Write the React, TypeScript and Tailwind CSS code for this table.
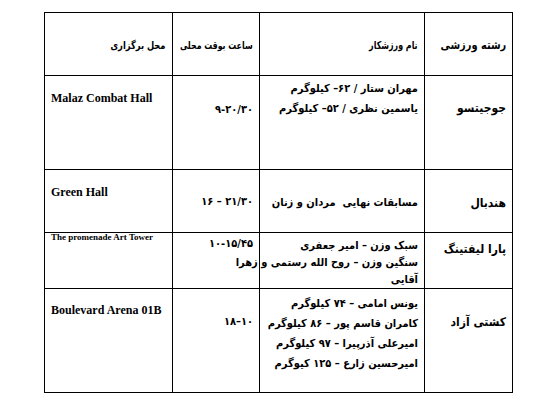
const fa = { fontFamily: '"DejaVu Sans Condensed", "DejaVu Sans", sans-serif' };
const en = { fontFamily: '"Liberation Serif", serif' };

// the source font is narrower than DejaVu, so headers get squeezed a little
const headers = [
  { label: 'رشته ورزشی', cls: 'text-[11.5px] scale-x-[0.95]' },
  { label: 'نام ورزشکار', cls: 'text-[11px] scale-x-[0.8]' },
  { label: 'ساعت بوقت محلی', cls: 'text-[10.5px] scale-x-[0.83]' },
  { label: 'محل برگزاری', cls: 'text-[10.5px] scale-x-[0.88]' },
];

export default function App() {
  return (
    <div className="w-[552px] h-[420px] bg-white pl-[44px] pt-[12px]">
      <table dir="rtl" className="w-[469px] table-fixed border-collapse text-black whitespace-nowrap" style={fa}>
        <colgroup>
          <col className="w-[88px]" />
          <col className="w-[165px]" />
          <col className="w-[87px]" />
          <col className="w-[128px]" />
        </colgroup>
        <tbody className="text-[11px] font-bold">
          <tr className="h-[63px]">
            {headers.map((h) => (
              <td key={h.label} className="border border-black align-middle pr-[6px] pt-[4px] text-right">
                <span className={`inline-block origin-right ${h.cls}`}>{h.label}</span>
              </td>
            ))}
          </tr>

          <tr className="h-[94px]">
            <td className="border border-black align-top pr-[6px] pt-[22px] leading-[20px] text-[12px]">جوجیتسو</td>
            <td className="border border-black align-top pr-[6px] pt-[3px] leading-[20px]">
              <div>مهران ستار / ۶۲– کیلوگرم</div>
              <div>یاسمین نظری / ۵۲– کیلوگرم</div>
            </td>
            <td className="border border-black align-top pr-[6px] pt-[24px] leading-[20px]">
              <span dir="ltr">۹-۲۰/۳۰</span>
            </td>
            <td dir="ltr" className="border border-black align-top pl-[6px] pt-[14px] text-left text-[12px] leading-[16px]" style={en}>
              Malaz Combat Hall
            </td>
          </tr>

          <tr className="h-[63px]">
            <td className="border border-black align-top pr-[6px] pt-[23px] leading-[20px] text-[12px]">هندبال</td>
            <td className="border border-black align-top pr-[6px] pt-[23px] leading-[20px]">مسابقات نهایی&nbsp; مردان و زنان</td>
            <td className="border border-black align-top pr-[6px] pt-[22px] leading-[20px]">
              <span dir="ltr">۱۶ – ۲۱/۳۰</span>
            </td>
            <td dir="ltr" className="border border-black align-top pl-[6px] pt-[14px] text-left text-[12px] leading-[16px]" style={en}>
              Green Hall
            </td>
          </tr>

          <tr className="h-[56px]">
            <td className="border border-black align-top pr-[6px] pt-[6px] leading-[20px] text-[12px]">پارا لیفتینگ</td>
            <td className="border border-black align-top pr-[6px] pt-[4px] leading-[17px]">
              <div>سبک وزن – امیر جعفری</div>
              <div>سنگین وزن – روح الله رستمی و زهرا</div>
              <div>آقایی</div>
            </td>
            <td className="border border-black align-top pr-[6px] pt-[1px] leading-[20px]">
              <span dir="ltr">۱۰-۱۵/۴۵</span>
            </td>
            <td dir="ltr" className="border border-black align-top pl-[6px] pt-0 text-left text-[9px] leading-[9px]" style={en}>
              The promenade Art Tower
            </td>
          </tr>

          <tr className="h-[104px]">
            <td className="border border-black align-top pr-[6px] pt-[23px] leading-[20px] text-[12px]">کشتی آزاد</td>
            <td className="border border-black align-top pr-[6px] pt-[5px] leading-[20px]">
              <div>یونس امامی – ۷۴ کیلوگرم</div>
              <div>کامران قاسم پور – ۸۶ کیلوگرم</div>
              <div>امیرعلی آذرپیرا – ۹۷ کیلوگرم</div>
              <div>امیرحسین زارع – ۱۲۵ کیوگرم</div>
            </td>
            <td className="border border-black align-top pr-[6px] pt-[23px] leading-[20px]">
              <span dir="ltr">۱۸–۱۰</span>
            </td>
            <td dir="ltr" className="border border-black align-top pl-[6px] pt-[13px] text-left text-[12px] leading-[16px]" style={en}>
              Boulevard Arena 01B
            </td>
          </tr>
        </tbody>
      </table>
    </div>
  );
}
